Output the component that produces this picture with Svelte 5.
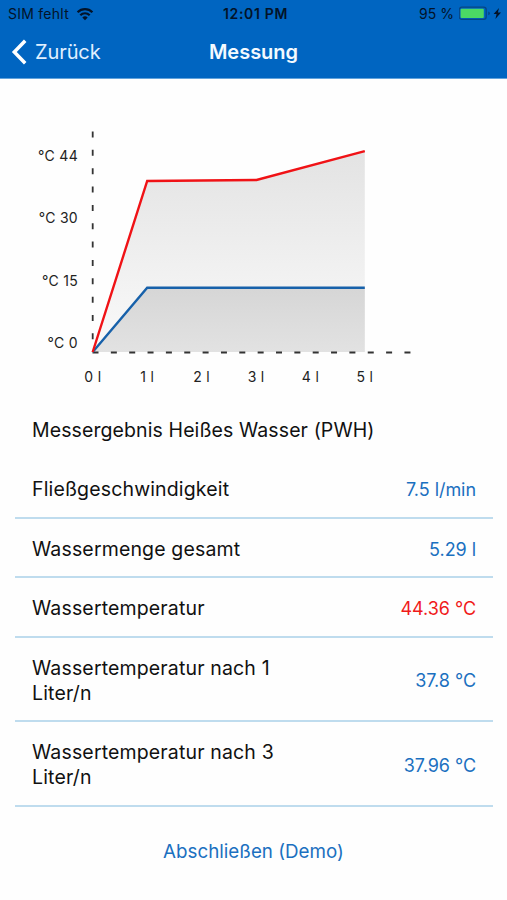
<script>
    let results = $state([
        {label: 'Fließgeschwindigkeit', value: '7.5 l/min'},
        {label: 'Wassermenge gesamt', value: '5.29 l'},
        {label: 'Wassertemperatur', value: '44.36 °C', hot: true},
        {label: 'Wassertemperatur nach 1 Liter/n', value: '37.8 °C', tall: true},
        {label: 'Wassertemperatur nach 3 Liter/n', value: '37.96 °C', tall: true}
    ]);

    const temperatures = [
        {text: '°C 44', y: 161},
        {text: '°C 30', y: 223.3},
        {text: '°C 15', y: 285.6},
        {text: '°C 0', y: 348}
    ];

    const liters = [0, 1, 2, 3, 4, 5];

    // chart origin and width of one liter
    const originX = 92.9;
    const step = 54.4;
    const chartTop = 79;

    const hotLine = '92.7,352 147.2,181 256.5,180 364.8,151.2';
    const coldLine = '92.7,352 147.2,287.8 364.8,287.8';
</script>

<div class="screen">
    <header>
        <div class="status-bar">
            <div class="carrier">
                <span>SIM fehlt</span>
                <svg width="18" height="14" viewBox="0 0 18 14">
                    <path d="M1.6 5.2a10.6 10.6 0 0 1 14.8 0" fill="none" stroke="#031328" stroke-width="2.3"/>
                    <path d="M4.3 8.2a6.7 6.7 0 0 1 9.4 0" fill="none" stroke="#031328" stroke-width="2.2"/>
                    <path d="M6.3 10.5a3.9 3.9 0 0 1 5.4 0L9 13.2z" fill="#031328"/>
                </svg>
            </div>
            <span class="clock">12:01 PM</span>
            <div class="battery">
                <span>95 %</span>
                <svg width="44" height="15" viewBox="0 0 44 15">
                    <rect x="0.2" y="1.2" width="27" height="12.2" rx="2.6" fill="none" stroke="#064684" stroke-width="1.3"/>
                    <rect x="1.6" y="2.7" width="23.2" height="9.2" rx="1" fill="#4bd964"/>
                    <path d="M29.2 5.4q1.8.4 1.8 1.9t-1.8 1.9z" fill="#064684"/>
                    <path d="M40 2 34.6 8h3l-1.2 5 5.6-6.4h-3.1z" fill="#031328"/>
                </svg>
            </div>
        </div>
        <nav>
            <button class="back">
                <svg width="17" height="28" viewBox="0 0 17 28">
                    <path d="M14.2 2.8 3.3 14l10.9 11.2" fill="none" stroke="#fff" stroke-width="3.5"/>
                </svg>
                <span>Zurück</span>
            </button>
            <h1>Messung</h1>
        </nav>
    </header>

    <svg class="chart" width="507" height="321" viewBox="0 {chartTop} 507 321">
        <defs>
            <linearGradient id="hot" x1="0" y1="0" x2="0" y2="1">
                <stop offset="0" stop-color="#e3e3e3"/>
                <stop offset="1" stop-color="#fafafa"/>
            </linearGradient>
            <linearGradient id="cold" x1="0" y1="0" x2="0" y2="1">
                <stop offset="0" stop-color="#d6d6d6"/>
                <stop offset="1" stop-color="#e2e2e2"/>
            </linearGradient>
        </defs>
        <polygon points="{hotLine} 364.8,352" fill="url(#hot)"/>
        <polygon points="{coldLine} 364.8,352" fill="url(#cold)"/>
        <line x1="92.7" y1="131.5" x2="92.7" y2="352" class="axis"/>
        <line x1="92.5" y1="352.5" x2="411" y2="352.5" class="axis"/>
        <polyline points={coldLine} class="line cold"/>
        <polyline points={hotLine} class="line hot"/>
        {#each temperatures as t}
            <text x="78" y={t.y} text-anchor="end">{t.text}</text>
        {/each}
        {#each liters as l}
            <text x={originX + l * step} y="382" text-anchor="middle">{l} l</text>
        {/each}
    </svg>

    <h2>Messergebnis Heißes Wasser (PWH)</h2>

    <div class="results">
        {#each results as row}
            <div class="row" class:tall={row.tall}>
                <span class="label">{row.label}</span>
                <span class="value" class:hot={row.hot}>{row.value}</span>
            </div>
        {/each}
    </div>

    <button class="finish">Abschließen (Demo)</button>
</div>

<style>
    :global(body) {
        margin: 0;
        background: #fefefe;
    }

    .screen {
        width: 507px;
        height: 900px;
        overflow: hidden;
        display: flex;
        flex-direction: column;
        background: #fefefe;
        color: #111;
        font-family: Inter, "Liberation Sans", sans-serif;
    }

    button {
        border: none;
        background: none;
        padding: 0;
        font-family: inherit;
        cursor: pointer;
    }

    header {
        height: 79px;
        box-sizing: border-box;
        flex: none;
        background: #0065c1;
        border-bottom: 1px solid #62a3dc;
    }

    .status-bar {
        height: 27px;
        display: grid;
        grid-template-columns: 1fr auto 1fr;
        align-items: center;
        padding: 0 4px 0 8px;
        color: #031328;
        font-size: 14px;
    }

    .carrier,
    .battery {
        display: flex;
        align-items: center;
        gap: 7px;
    }

    .carrier {
        letter-spacing: 0.25px;
    }

    .battery {
        justify-content: flex-end;
        gap: 5px;
    }

    .clock {
        font-weight: 600;
        letter-spacing: 0.65px;
    }

    nav {
        height: 50px;
        display: grid;
        grid-template-columns: 1fr auto 1fr;
        align-items: center;
        color: #f4faff;
    }

    .back {
        display: flex;
        align-items: center;
        gap: 7px;
        padding-left: 11px;
        color: #e0f0ff;
        font-size: 20px;
        letter-spacing: -0.1px;
    }

    h1 {
        margin: 0;
        font-size: 20px;
        font-weight: 600;
    }

    .chart {
        display: block;
        flex: none;
    }

    .chart text {
        font-size: 14px;
        letter-spacing: 0.3px;
        fill: #222;
    }

    .axis {
        stroke: #333;
        stroke-width: 1.8;
        stroke-dasharray: 6 12.35;
    }

    .line {
        fill: none;
        stroke-width: 2.4;
    }

    .line.hot {
        stroke: #f01216;
    }

    .line.cold {
        stroke: #1761aa;
    }

    h2 {
        margin: 0;
        height: 59px;
        padding-left: 32px;
        font-size: 19.5px;
        font-weight: 400;
        line-height: 61px;
        letter-spacing: 0.1px;
    }

    .results {
        margin: 0 14px 0 15px;
    }

    .row {
        height: 59.5px;
        box-sizing: border-box;
        display: flex;
        align-items: center;
        justify-content: space-between;
        padding: 4px 17px 0;
        border-bottom: 2px solid #bfdcee;
    }

    .row.tall {
        height: 84.5px;
    }

    .label {
        width: 260px;
        font-size: 19.5px;
        line-height: 25px;
        letter-spacing: 0.15px;
    }

    .value {
        color: #1b70c0;
        font-size: 18px;
        letter-spacing: -0.05px;
    }

    .value.hot {
        color: #f01a1a;
    }

    .finish {
        height: 90px;
        color: #1b70c0;
        font-size: 18.8px;
    }
</style>
